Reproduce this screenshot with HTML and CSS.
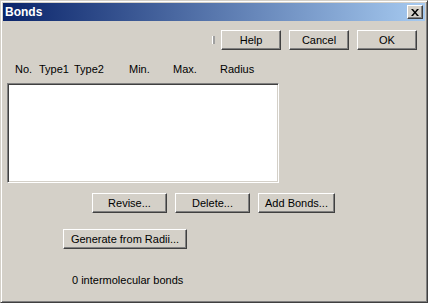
FILE: index.html
```html
<!DOCTYPE html>
<html>

<head>
    <meta charset="UTF-8">
    <title>Bonds</title>
    <link rel="stylesheet" href="styles.css">
</head>

<body>
    <div class="window">
        <div class="titlebar">
            <span class="title">Bonds</span>
            <span class="close">
                <svg width="8" height="7" viewBox="0 0 8 7">
                    <path d="M0 0h2l2 2.5 2-2.5h2l-3 3.5 3 3.5h-2l-2-2.5-2 2.5h-2l3-3.5z" fill="#000"/>
                </svg>
            </span>
        </div>
        <div class="content">
            <div class="toprow">
                <span class="mark"></span>
                <button class="btn">Help</button>
                <button class="btn">Cancel</button>
                <button class="btn">OK</button>
            </div>
            <div class="headers">
                <span class="h-no">No.</span>
                <span class="h-t1">Type1</span>
                <span class="h-t2">Type2</span>
                <span class="h-min">Min.</span>
                <span class="h-max">Max.</span>
                <span class="h-rad">Radius</span>
            </div>
            <div class="listbox"></div>
            <div class="editrow">
                <button class="btn wide">Revise...</button>
                <button class="btn wide">Delete...</button>
                <button class="btn wider">Add Bonds...</button>
            </div>
            <div class="genrow">
                <button class="btn gen">Generate from Radii...</button>
            </div>
            <div class="status">0 intermolecular bonds</div>
        </div>
    </div>
</body>

</html>
```
FILE: styles.css
```css
body {
    margin: 0;
    background-color: #d4d0c8;
}

.window {
    box-sizing: border-box;
    width: 428px;
    height: 303px;
    padding: 2px;
    background-color: #d4d0c8;
    border: 1px solid;
    border-color: #d4d0c8 #404040 #404040 #d4d0c8;
    box-shadow: inset 1px 1px #fff, inset -1px -1px #808080;
    font-family: "Liberation Sans", Arial, sans-serif;
    font-size: 11px;
    color: #000;
}

.titlebar {
    height: 18px;
    display: flex;
    align-items: center;
    justify-content: space-between;
    padding: 0 2px 0 2px;
    background: linear-gradient(to right, #0a246a, #a6caf0);
}

.title {
    color: #fff;
    font-weight: bold;
    font-size: 12px;
}

.close {
    box-sizing: border-box;
    width: 16px;
    height: 14px;
    display: flex;
    align-items: center;
    justify-content: center;
    background-color: #d4d0c8;
    border: 1px solid;
    border-color: #fff #404040 #404040 #fff;
    box-shadow: inset -1px -1px #808080;
}

.content {
    padding: 0 8px 0 4px;
}

.btn {
    box-sizing: border-box;
    height: 20px;
    padding: 0;
    margin: 0;
    background-color: #d4d0c8;
    border: 1px solid;
    border-color: #fff #404040 #404040 #fff;
    box-shadow: inset -1px -1px #808080;
    font-family: "Liberation Sans", Arial, sans-serif;
    font-size: 11px;
    color: #000;
}

.toprow {
    display: flex;
    justify-content: flex-end;
    align-items: center;
    gap: 8px;
    margin-top: 9px;
}

.toprow .btn {
    width: 60px;
}

.mark {
    width: 2px;
    height: 8px;
    margin-right: -2px;
    background-color: #a0a0a0;
    border-left: 1px solid #fff;
}

.headers {
    height: 14px;
    line-height: 14px;
    margin-top: 12px;
    display: flex;
}

.headers span {
    display: block;
}

.h-no { margin-left: 8px; width: 24px; }
.h-t1 { width: 35px; }
.h-t2 { width: 55px; }
.h-min { width: 44px; }
.h-max { width: 47px; }

.listbox {
    box-sizing: border-box;
    width: 272px;
    height: 100px;
    margin-top: 7px;
    background-color: #fff;
    border: 1px solid;
    border-color: #808080 #fff #fff #808080;
    box-shadow: inset 1px 1px #404040, inset -1px -1px #d4d0c8;
}

.editrow {
    display: flex;
    gap: 8px;
    margin: 10px 0 0 85px;
}

.wide {
    width: 75px;
}

.wider {
    width: 77px;
}

.genrow {
    margin: 16px 0 0 56px;
}

.gen {
    width: 124px;
}

.status {
    margin: 24px 0 0 65px;
    line-height: 14px;
}
```
